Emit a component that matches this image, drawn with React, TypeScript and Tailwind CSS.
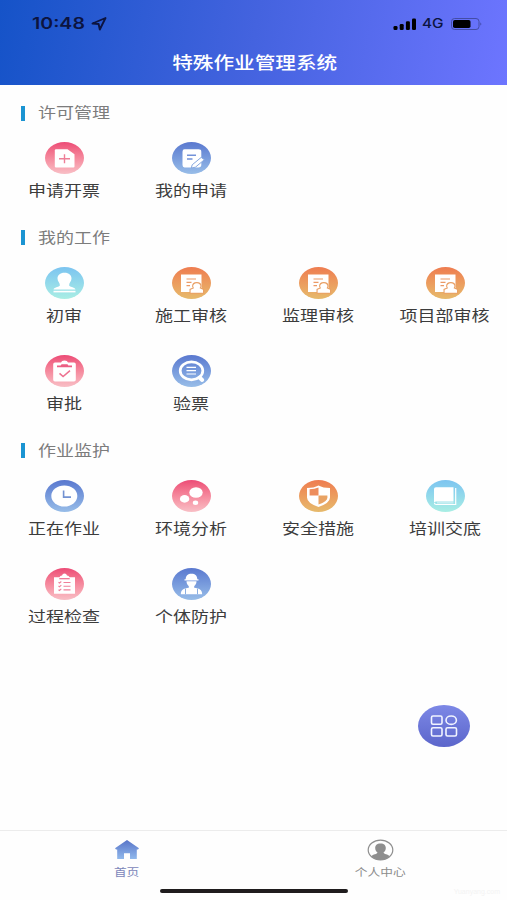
import type { ReactNode } from 'react'

const tones = {
  red: 'bg-linear-to-b from-[#ec4a76] to-[#f8bfc6]',
  blue: 'bg-linear-to-b from-[#5a78cf] to-[#98bde8]',
  cyan: 'bg-linear-to-b from-[#7cc4f0] to-[#a9eee4]',
  orange: 'bg-linear-to-b from-[#ee7c50] to-[#e6ba6c]',
}

type Tone = keyof typeof tones

interface Item {
  label: string
  tone: Tone
  icon: ReactNode
}

interface Section {
  title: string
  items: Item[]
}

const auditIcon = (
  <>
    <path d="M9 7.5h20.5V25H9z" fill="#fff" />
    <path d="M14.5 12h9.5M14.5 15.3h5M14.5 18.6h3.5" stroke="#eb9a66" strokeWidth="1.2" />
    <path
      d="M24.8 16.2c2.4 0 3.600 1.400 3.600 2.900 0 1-.6 1.500-.8 2.200l3.400 1.400v3H18.600v-3l3.400-1.400c-.2-.7-.8-1.200-.8-2.200 0-1.500 1.200-2.900 3.600-2.900z"
      fill="#fff"
      stroke="#e9a066"
      strokeWidth="2.2"
      style={{ paintOrder: 'stroke' }}
    />
  </>
)

const sections: Section[] = [
  {
    title: '许可管理',
    items: [
      {
        label: '申请开票',
        tone: 'red',
        icon: (
          <>
            <path d="M11 7.3h11.5l7 5v12.2q0 1-1 1H11q-1.2 0-1.2-1v-16q0-1.2 1.2-1.2z" fill="#fff" />
            <path d="M14 16.8h11M19.5 12.3v9" stroke="#ee7f98" strokeWidth="1.4" />
          </>
        ),
      },
      {
        label: '我的申请',
        tone: 'blue',
        icon: (
          <>
            <path d="M12.5 7.3h14q2.8 0 2.8 2.4v13.4q0 2.4-2.8 2.4h-14q-2 0-2-2.4V9.7q0-2.4 2-2.4z" fill="#fff" />
            <path d="M15 13.3h9M15 17h5.5" stroke="#7392d9" strokeWidth="1.4" />
            <path d="M19.3 26l.9-3.2 9-7.4 3.2 2.3-9 7.500z" fill="#fff" stroke="#85a7df" strokeWidth="1" />
          </>
        ),
      },
    ],
  },
  {
    title: '我的工作',
    items: [
      {
        label: '初审',
        tone: 'cyan',
        icon: (
          <>
            <path
              d="M19.5 5.8c4.6 0 7 2.6 7 5.7 0 2.8-2.4 4.2-2.4 6.7 0 1.8 5.5 1.6 6.4 4.2H8.5c.9-2.6 6.4-2.4 6.4-4.2 0-2.5-2.4-3.9-2.4-6.7 0-3.1 2.4-5.7 7-5.7z"
              fill="#fff"
            />
            <path d="M8.5 24.6h22" stroke="#fff" strokeWidth="1.6" />
          </>
        ),
      },
      { label: '施工审核', tone: 'orange', icon: auditIcon },
      { label: '监理审核', tone: 'orange', icon: auditIcon },
      { label: '项目部审核', tone: 'orange', icon: auditIcon },
    ],
  },
  {
    title: '',
    items: [
      {
        label: '审批',
        tone: 'red',
        icon: (
          <>
            <path
              d="M10 7.5h6q.5-2 3.5-2t3.5 2h6q1.8 0 1.8 1.700v15.600q0 1.700-1.800 1.700H10q-1.800 0-1.800-1.700V9.200q0-1.700 1.800-1.700z"
              fill="#fff"
            />
            <path d="M12 12.2v-1.700h3.7q.5-1.700 2-1.200h3.600q1.500-.5 2 1.200H27v1.700z" fill="#ec5f83" />
            <path d="M14.5 18.3l3.600 3.200 6.900-5.800" fill="none" stroke="#ee7391" strokeWidth="1.6" />
          </>
        ),
      },
      {
        label: '验票',
        tone: 'blue',
        icon: (
          <>
            <ellipse cx="19.5" cy="15.8" rx="11.3" ry="9" fill="none" stroke="#fff" strokeWidth="2.7" />
            <path d="M14.5 12.4H24M14.5 15.7H24M14.5 19H24" stroke="#fff" strokeWidth="1.2" />
            <path d="M27.5 22.5l2.700 2.500" stroke="#fff" strokeWidth="4" strokeLinecap="round" />
          </>
        ),
      },
    ],
  },
  {
    title: '作业监护',
    items: [
      {
        label: '正在作业',
        tone: 'blue',
        icon: (
          <>
            <ellipse cx="19.3" cy="16" rx="13" ry="10.5" fill="#fff" />
            <path d="M18.6 10.5v6.600H26" fill="none" stroke="#7392d2" strokeWidth="1.6" />
          </>
        ),
      },
      {
        label: '环境分析',
        tone: 'red',
        icon: (
          <g fill="#fff">
            <ellipse cx="24" cy="12.5" rx="6.7" ry="5.3" />
            <ellipse cx="12.6" cy="18.9" rx="4.7" ry="3.8" />
            <ellipse cx="23.5" cy="22.8" rx="2.7" ry="2.2" />
          </g>
        ),
      },
      {
        label: '安全措施',
        tone: 'orange',
        icon: (
          <>
            <path d="M19.5 5.5Q24 8 31 8v9.5q0 5.5-11.5 9.5Q8 23 8 17.5V8q7 0 11.5-2.5z" fill="#fff" />
            <path d="M10.6 9.2q5 0 8.900-1.700v8h-8.900z" fill="#ed8d5c" />
            <path d="M19.5 15.5h8.9v2.300q0 3.700-8.900 6.700z" fill="#e9a364" />
          </>
        ),
      },
      {
        label: '培训交底',
        tone: 'cyan',
        icon: (
          <>
            <path d="M10 7.2h17.5v14.300H10q-2 .2-2 1.700V9q0-1.800 2-1.800z" fill="#fff" />
            <path d="M29.7 8v16.5H10.200q-1.700 0-1.700-1.500" fill="none" stroke="#fff" strokeWidth="1.2" />
            <path d="M11 22.9h16.5" stroke="#fff" strokeWidth="0.7" />
          </>
        ),
      },
    ],
  },
  {
    title: '',
    items: [
      {
        label: '过程检查',
        tone: 'red',
        icon: (
          <>
            <path d="M9 9.200h5.5q.5-1.700 2.500-1.700.5-2 2.500-2t2.500 2q2 0 2.500 1.700H30v16.500H9z" fill="#fff" />
            <path d="M14.3 10.7h10.4" stroke="#ee6d8d" strokeWidth="1.2" />
            <path
              d="M13.5 14.3l1 .8 1.800-1.600M18.500 14.500h7M13.500 18l1 .8 1.800-1.600M18.500 18.200h7M13.500 21.700l1 .8 1.800-1.600M18.500 21.900h7"
              fill="none"
              stroke="#f07f99"
              strokeWidth="1.1"
            />
          </>
        ),
      },
      {
        label: '个体防护',
        tone: 'blue',
        icon: (
          <>
            <path d="M12.5 12.5v-1.300h1.200c0-3.400 2.400-5.200 4.300-5.500h3c1.900.3 4.300 2.100 4.300 5.500h1.200v1.300z" fill="#fff" />
            <path
              d="M14.5 13.3h10c0 2.500-1.200 3.900-2.300 4.900v1.500c5 .8 7.800 1.500 8 6.500H8.800c.2-5 3-5.700 8-6.500v-1.500c-1.100-1-2.300-2.400-2.300-4.900z"
              fill="#fff"
            />
            <path d="M13.5 20.7v5.500M25.500 20.7v5.500" stroke="#8aaee2" strokeWidth="1" />
          </>
        ),
      },
    ],
  },
]

function StatusBar() {
  return (
    <div className="flex h-12 items-center justify-between pl-8 pr-6 text-[#0c1440]">
      <div className="flex items-center">
        <span className="w-[54px] origin-left scale-x-[1.26] whitespace-nowrap font-['Inter',sans-serif] text-[15.5px] font-semibold">
          10:48
        </span>
        <svg className="ml-[5px] size-4" viewBox="0 0 16 16">
          <path d="M1.5 7.5L14.500 2 8.800 13.500 7.600 8z" fill="none" stroke="currentColor" strokeWidth="1.9" strokeLinejoin="round" />
        </svg>
      </div>
      <div className="flex items-center text-black">
        <svg className="h-3 w-6" viewBox="0 0 24 12">
          <rect x="0.5" y="8" width="4" height="4" rx="1.3" />
          <rect x="6.7" y="6" width="4" height="6" rx="1.3" />
          <rect x="12.9" y="3.2" width="4" height="8.8" rx="1.3" />
          <rect x="19" y="0.5" width="4" height="11.5" rx="1.3" />
        </svg>
        <span className="ml-[5px] w-[23px] origin-left scale-x-[1.18] font-['Inter',sans-serif] text-[13px] font-medium text-[#0c1440]">
          4G
        </span>
        <svg className="ml-[6px] h-3 w-8" viewBox="0 0 32 12">
          <rect x="0.5" y="0.5" width="27.5" height="11" rx="3" fill="none" stroke="#3f489c" strokeWidth="0.9" />
          <rect x="2" y="2" width="17.5" height="8" rx="1.8" />
          <path d="M29.5 4.3q1.700 1.700 0 3.400z" fill="#333b8c" />
        </svg>
      </div>
    </div>
  )
}

function MenuItem({ label, tone, icon }: Item) {
  return (
    <div className="flex h-[88.5px] flex-col items-center pt-[11px]">
      <div className={`h-8 w-[39px] rounded-[50%] ${tones[tone]}`}>
        <svg className="h-8 w-[39px]" viewBox="0 0 39 32">
          {icon}
        </svg>
      </div>
      <span className="mt-[6px] scale-x-[1.2] whitespace-nowrap text-[15px] leading-5 text-[#3c3c3c]">{label}</span>
    </div>
  )
}

export default function App() {
  return (
    <div className="flex h-[900px] w-[507px] flex-col overflow-hidden bg-[#fefefe] font-['Noto_Sans_CJK_SC',sans-serif]">
      <header className="h-[85px] bg-linear-[100deg] from-[#1553c8] via-[#4463df] to-[#6d75ff]">
        <StatusBar />
        <h1 className="flex h-7 items-center justify-center pl-[3px] text-white">
          <span className="scale-x-[1.2] text-[17.2px] leading-7 font-medium">特殊作业管理系统</span>
        </h1>
      </header>

      <main className="flex-1 pt-[10px]">
        {sections.map((section, i) => (
          <section key={i}>
            {section.title && (
              <div className="flex h-9 items-center pl-[21px]">
                <i className="h-[15px] w-1 bg-[#1b94d2]" />
                <h2 className="mb-[1.5px] ml-[13px] origin-left scale-x-[1.2] text-[15px] leading-5 text-[#7c7c7c]">
                  {section.title}
                </h2>
              </div>
            )}
            <div className="grid grid-cols-[repeat(4,127px)] pl-[0.5px]">
              {section.items.map((item) => (
                <MenuItem key={item.label} {...item} />
              ))}
            </div>
          </section>
        ))}
      </main>

      <button className="absolute left-[418px] top-[705px] flex h-[42px] w-[52px] items-center justify-center rounded-[50%] bg-linear-to-b from-[#7d88e6] to-[#5c66cb]">
        <svg className="h-6 w-7" viewBox="0 0 28 24" fill="none" stroke="#f1f4ff" strokeWidth="1.6">
          <rect x="1.5" y="2" width="10.5" height="8.3" rx="1.5" />
          <ellipse cx="21.2" cy="6.2" rx="5.2" ry="4.2" />
          <rect x="1.5" y="13.7" width="10.5" height="8.3" rx="1.5" />
          <rect x="16" y="13.7" width="10.5" height="8.3" rx="1.5" />
        </svg>
      </button>

      <nav className="grid h-[59px] shrink-0 grid-cols-2 border-t border-[#ececec]">
        <div className="flex flex-col items-center pt-2">
          <svg className="h-[21px] w-[26px]" viewBox="0 0 26 21">
            <defs>
              <linearGradient id="home" x1="0" y1="0" x2="0" y2="1">
                <stop offset="0" stopColor="#5874c8" />
                <stop offset="1" stopColor="#91b9ec" />
              </linearGradient>
            </defs>
            <path d="M13 1L25 9.300 24 10.500h-1.200V20H16v-5.700h-6V20H3.200v-9.500H2L1 9.300z" fill="url(#home)" />
          </svg>
          <span className="mt-1 scale-x-[1.2] text-[10.6px] leading-4 text-[#7c86ba]">首页</span>
        </div>
        <div className="flex flex-col items-center pt-2">
          <svg className="h-[22px] w-[27px]" viewBox="0 0 27 22">
            <ellipse cx="13.5" cy="11" rx="12.3" ry="9.9" fill="none" stroke="#8e8e8e" strokeWidth="1.2" />
            <path
              d="M13.5 4.5c3.700 0 5.300 2 5.300 4.500 0 2-1 3.500-2.300 4.500.2 1.800 4.700 1.500 6 3.800q-3.500 3.600-9 3.600t-9-3.600c1.300-2.300 5.800-2 6-3.800C9.200 12.500 8.200 11 8.200 9c0-2.500 1.600-4.500 5.300-4.500z"
              fill="#8e8e8e"
            />
          </svg>
          <span className="mt-[3px] scale-x-[1.2] text-[10.6px] leading-4 text-[#8c8c8c]">个人中心</span>
        </div>
      </nav>

      <footer className="grid h-[11px] shrink-0 grid-cols-[160px_188px_1fr]">
        <div className="col-start-2 h-1 rounded-full bg-[#1f1c1d]" />
        <span className="pr-[7px] text-right font-['Liberation_Sans',sans-serif] text-[7px] leading-[6px] text-[#f3f3f3]">
          Yuanyang.com
        </span>
      </footer>
    </div>
  )
}
